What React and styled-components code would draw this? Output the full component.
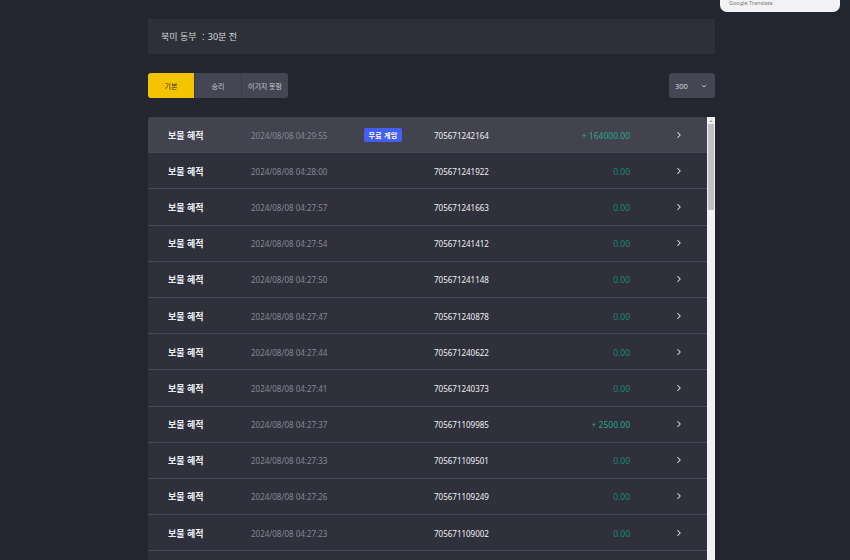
import React from 'react';
import styled, { createGlobalStyle } from 'styled-components';
import { ChevronRight, ChevronDown } from 'lucide-react';

const GlobalStyle = createGlobalStyle`
  html, body {
    margin: 0;
    padding: 0;
    height: 100%;
    overflow: hidden;
    background: #24262f;
    font-family: "Noto Sans", "Noto Sans CJK KR", sans-serif;
  }
`;

const rows = [
  { time: '04:29:55', id: '705671242164', amount: '+ 164000.00', free: true },
  { time: '04:28:00', id: '705671241922', amount: '0.00' },
  { time: '04:27:57', id: '705671241663', amount: '0.00' },
  { time: '04:27:54', id: '705671241412', amount: '0.00' },
  { time: '04:27:50', id: '705671241148', amount: '0.00' },
  { time: '04:27:47', id: '705671240878', amount: '0.00' },
  { time: '04:27:44', id: '705671240622', amount: '0.00' },
  { time: '04:27:41', id: '705671240373', amount: '0.00' },
  { time: '04:27:37', id: '705671109985', amount: '+ 2500.00' },
  { time: '04:27:33', id: '705671109501', amount: '0.00' },
  { time: '04:27:26', id: '705671109249', amount: '0.00' },
  { time: '04:27:23', id: '705671109002', amount: '0.00' },
];

const App = () => (
  <Page>
    <GlobalStyle />
    <TranslatePopup>Google Translate</TranslatePopup>
    <Column>
      <RegionPanel>북미 동부 ：30분 전</RegionPanel>
      <Toolbar>
        <Tabs>
          <Tab active>기본</Tab>
          <Tab>승리</Tab>
          <Tab>이기지 못함</Tab>
        </Tabs>
        <CountSelect>
          <span>300</span>
          <ChevronDown size={8} strokeWidth={2.5} />
        </CountSelect>
      </Toolbar>
      <ListFrame>
        <List>
          {rows.map((row, i) => (
            <Row key={row.id} highlight={i === 0}>
              <Name>보물 혜적</Name>
              <DateCell>2024/08/08 {row.time}</DateCell>
              <div>{row.free && <Badge>무료 게임</Badge>}</div>
              <RoundId>{row.id}</RoundId>
              <Amount win={row.amount !== '0.00'}>{row.amount}</Amount>
              <Arrow>
                <ChevronRight size={10} strokeWidth={2.5} />
              </Arrow>
            </Row>
          ))}
          <Row />
        </List>
        <ScrollRail>
          <ScrollArrow />
          <ScrollThumb />
        </ScrollRail>
      </ListFrame>
    </Column>
  </Page>
);

const Page = styled.div`
  position: relative;
  height: 560px;
  overflow: hidden;
  padding-left: 148px;
  box-sizing: border-box;
`;

const TranslatePopup = styled.div`
  position: absolute;
  top: -8px;
  left: 720px;
  width: 120px;
  height: 20px;
  box-sizing: border-box;
  padding: 8px 0 0 9px;
  background: #f3f3f5;
  border-radius: 0 0 7px 7px;
  color: #7a7a7a;
  font-size: 5.5px;
  line-height: 6px;
`;

const Column = styled.div`
  width: 567px;
  padding-top: 19px;
  display: flex;
  flex-direction: column;
  gap: 19px;
`;

const RegionPanel = styled.div`
  height: 35px;
  display: flex;
  align-items: center;
  padding-left: 13px;
  background: #2d3039;
  color: #d6d7da;
  font-size: 9px;
`;

const Toolbar = styled.div`
  display: flex;
  justify-content: space-between;
  align-items: center;
`;

const Tabs = styled.div`
  display: flex;
  border-radius: 3px;
  overflow: hidden;
`;

const Tab = styled.div`
  width: 46px;
  height: 25px;
  display: flex;
  align-items: center;
  justify-content: center;
  font-size: 7px;
  background: ${p => (p.active ? '#f5c400' : '#444653')};
  color: ${p => (p.active ? '#3a3000' : '#c9cad1')};
  & + & {
    border-left: 1px solid #3a3c48;
  }
`;

const CountSelect = styled.div`
  width: 46px;
  height: 25px;
  box-sizing: border-box;
  display: flex;
  align-items: center;
  justify-content: space-between;
  padding: 0 7px 0 6px;
  border-radius: 3px;
  background: #444653;
  color: #d2d3d8;
  font-size: 7.5px;
`;

const ListFrame = styled.div`
  display: flex;
  height: 443px;
  overflow: hidden;
  border-radius: 3px 0 0 0;
`;

const List = styled.div`
  flex: 1;
  overflow: hidden;
`;

const Row = styled.div`
  height: 35.2px;
  display: grid;
  grid-template-columns: 83px 113px 70px 100px 96px 1fr;
  align-items: center;
  padding-left: 20px;
  background: ${p => (p.highlight ? '#42434f' : '#2f303c')};
  border-bottom: 1px solid #464859;
  font-size: 8.5px;
`;

const Name = styled.div`
  color: #eceef2;
  font-weight: 700;
  font-size: 9px;
  padding-top: 1px;
`;

const DateCell = styled.div`
  color: #868896;
  font-size: 8px;
  padding-top: 1px;
`;

const Badge = styled.span`
  display: inline-flex;
  align-items: center;
  justify-content: center;
  width: 38px;
  height: 14px;
  border-radius: 2px;
  background: #4460f2;
  color: #fff;
  font-size: 7px;
  font-weight: 700;
  letter-spacing: 0.3px;
`;

const RoundId = styled.div`
  color: #eef0f4;
  font-size: 8px;
  padding-top: 1px;
`;

const Amount = styled.div`
  text-align: right;
  color: ${p => (p.win ? '#24a88a' : '#158d70')};
  font-size: 8.5px;
  padding-top: 1px;
`;

const Arrow = styled.div`
  display: flex;
  padding-left: 44px;
  color: #e6e7ec;
`;

const ScrollRail = styled.div`
  width: 8px;
  display: flex;
  flex-direction: column;
  background: #f1f1f1;
`;

const ScrollArrow = styled.div`
  height: 7px;
  display: flex;
  justify-content: center;
  align-items: center;
  &::before {
    content: '';
    border-left: 2px solid transparent;
    border-right: 2px solid transparent;
    border-bottom: 2px solid #a3a3a3;
  }
`;

const ScrollThumb = styled.div`
  height: 86px;
  margin: 0 1px;
  background: #c1c1c1;
`;

export default App;
